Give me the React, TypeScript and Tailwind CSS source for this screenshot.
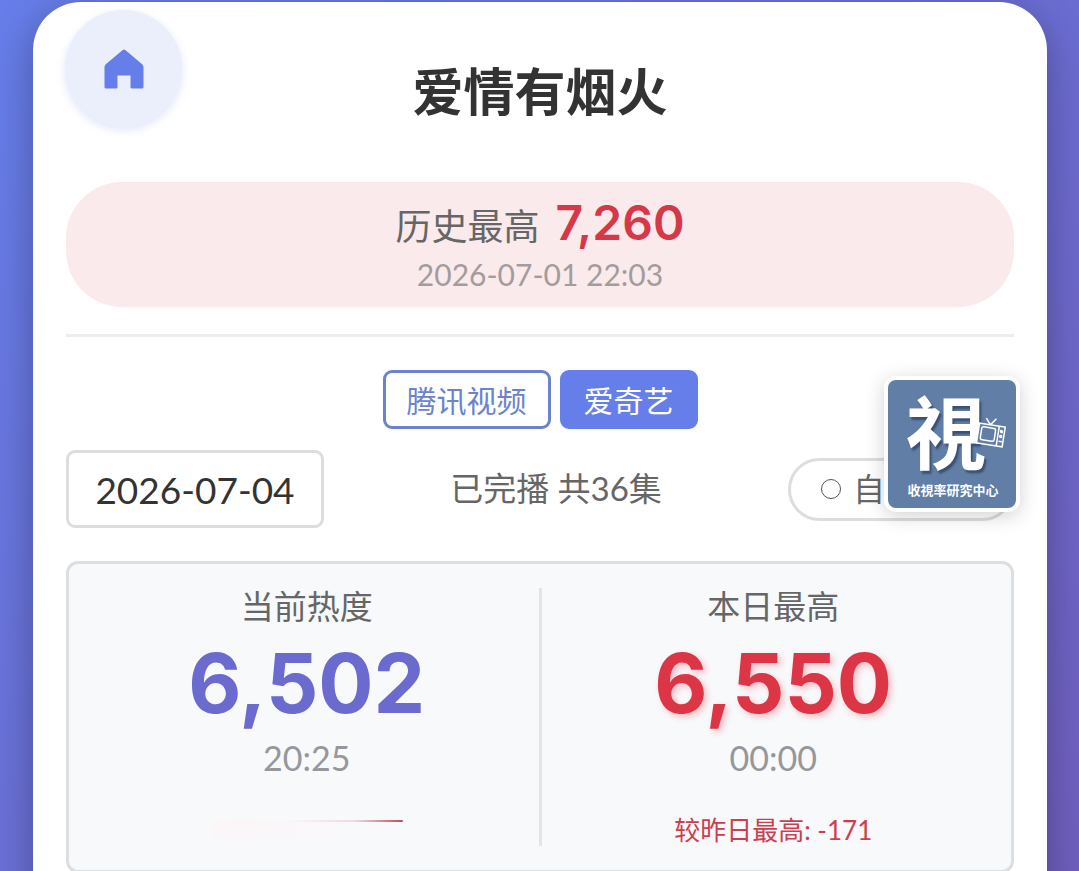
import { useState } from "react";

type StatProps = {
  label: string;
  value: string;
  time: string;
  valueClass: string;
  children: React.ReactNode;
};

const PLATFORMS = ["腾讯视频", "爱奇艺"];

function HomeIcon() {
  return (
    <svg viewBox="0 0 40 40" className="size-10" fill="#667eea" aria-hidden="true">
      <path d="M18.7 1.1Q20 0 21.3 1.1L38.2 15.2Q39.5 16.3 39.5 18V38Q39.5 39.5 38 39.5H28Q26.5 39.5 26.5 38V26.5H13.5V38Q13.5 39.5 12 39.5H2Q.5 39.5 .5 38V18Q.5 16.3 1.8 15.2Z" />
    </svg>
  );
}

function Stat({ label, value, time, valueClass, children }: StatProps) {
  return (
    <div className="flex flex-1 flex-col items-center">
      <div className="text-[33px] leading-9 text-[#666]">{label}</div>
      <div className={`mt-[18px] font-[Inter,sans-serif] text-[82px] leading-[84px] font-bold ${valueClass}`}>
        {value}
      </div>
      <div className="mt-3 text-[34px] leading-10 text-[#95979a]">{time}</div>
      <div className="mt-9 flex h-8 items-center text-[26px] text-[#cb3f4e]">{children}</div>
    </div>
  );
}

function Logo() {
  return (
    <a
      href="#center"
      aria-label="收視率研究中心"
      className="absolute -top-[74px] -right-1.5 block size-[136px] rounded-xl border-4 border-white bg-[#607ea6] shadow-[0_4px_20px_rgba(0,0,0,0.18)]"
    >
      <svg viewBox="0 0 128 128" className="size-full overflow-visible">
        <g fontFamily="'Noto Sans CJK TC', sans-serif" fill="#fff">
          <text
            x="58"
            y="83"
            fontSize="80"
            fontWeight="700"
            textAnchor="middle"
            className="[text-shadow:2px_3px_2px_rgba(35,50,80,0.6)]"
          >
            視
          </text>
          <text x="65" y="115" fontSize="13" fontWeight="700" textAnchor="middle">
            收視率研究中心
          </text>
        </g>
        <g transform="translate(103 54) rotate(9)" fill="none" stroke="#fff" strokeWidth="1.5">
          <rect x="-13" y="-9" width="26" height="20" fill="#607ea6" />
          <rect x="-10" y="-6" width="14" height="13" rx="2" />
          <path d="M7-9V11M-2-9-7-15M-2-9 3-16" />
          <circle cx="10" cy="-4" r="1" />
          <circle cx="10" cy="1" r="1" />
          <path d="M8.5 6H12" />
        </g>
      </svg>
    </a>
  );
}

export default function App() {
  const [platform, setPlatform] = useState("爱奇艺");
  const [date, setDate] = useState("2026-07-04");

  return (
    <div className="min-h-screen bg-[linear-gradient(135deg,#667eea_0%,#764ba2_160%)] pt-0.5 pr-8 pl-[33px] font-[Lato,'Noto_Sans_CJK_SC',sans-serif]">
      <main className="relative rounded-t-[48px] bg-white px-[33px] pb-8 shadow-[0_10px_40px_rgba(0,0,0,0.3)]">
        <a
          href="#home"
          aria-label="首页"
          className="absolute top-2 left-8 flex size-[117px] items-center justify-center rounded-full bg-[#ebeffc] shadow-[0_3px_8px_rgba(102,126,234,0.2)]"
        >
          <HomeIcon />
        </a>

        <h1 className="pt-[60px] text-center text-[51px] leading-[60px] font-bold text-[#333]">爱情有烟火</h1>

        <section className="mt-[60px] flex flex-col items-center rounded-[56px] bg-[#faeaeb] pt-[11px] pb-[15px]">
          <div className="flex items-baseline gap-4 leading-[60px] text-[#666]">
            <span className="text-[36px]">历史最高</span>
            <strong className="font-[Inter,sans-serif] text-[48px] font-semibold text-[#d63848]">7,260</strong>
          </div>
          <time className="text-[30px] leading-9 text-[#a39c9d]">2026-07-01 22:03</time>
        </section>

        <hr className="mt-[27px] border-t-[3px] border-[#eee]" />

        <nav className="mt-[33px] flex justify-center gap-[9px]">
          {PLATFORMS.map((name) => (
            <button
              key={name}
              type="button"
              onClick={() => setPlatform(name)}
              className={`h-[59px] rounded-[9px] border-[3px] px-[21px] text-[30px] leading-9 ${
                name === platform
                  ? "border-[#667eea] bg-[#667eea] text-white"
                  : "border-[#6c82cf] bg-white text-[#6c82cf]"
              }`}
            >
              {name}
            </button>
          ))}
        </nav>

        <div className="relative mt-[21px] flex items-center justify-between">
          <input
            type="text"
            aria-label="日期"
            value={date}
            onChange={(e) => setDate(e.target.value)}
            className="h-[78px] w-[258px] rounded-[9px] border-[3px] border-[#ddd] bg-white text-center text-[37px] text-[#333]"
          />
          <p className="text-[33px] text-[#666]">已完播 共36集</p>
          <button
            type="button"
            className="flex h-[63px] items-center gap-3 rounded-full border-[3px] border-[#ddd] px-[30px] text-[32px] text-[#666]"
          >
            <span className="size-5 rounded-full border border-[#555]" />
            自动刷新
          </button>
          <Logo />
        </div>

        <section className="mt-[33px] flex rounded-xl border-[3px] border-[#dcdfe2] bg-[#f8f9fb] py-6">
          <div className="flex flex-1 pl-1.5">
            <Stat label="当前热度" value="6,502" time="20:25" valueClass="text-[#6a6acf]">
              <span className="flex h-5 w-48 flex-col bg-linear-to-r from-[#fbf6f8] to-transparent">
                <span className="h-0.5 rounded-full bg-[linear-gradient(90deg,transparent_40%,#f0d8dc_75%,#b8505c)]" />
              </span>
            </Stat>
          </div>
          <div className="w-[3px] bg-[#e2e4e8]" />
          <div className="flex flex-1 pr-1.5">
            <Stat
              label="本日最高"
              value="6,550"
              time="00:00"
              valueClass="text-[#dc3545] [text-shadow:3px_3px_6px_rgba(220,53,69,0.3)]"
            >
              较昨日最高: -171
            </Stat>
          </div>
        </section>
      </main>
    </div>
  );
}
